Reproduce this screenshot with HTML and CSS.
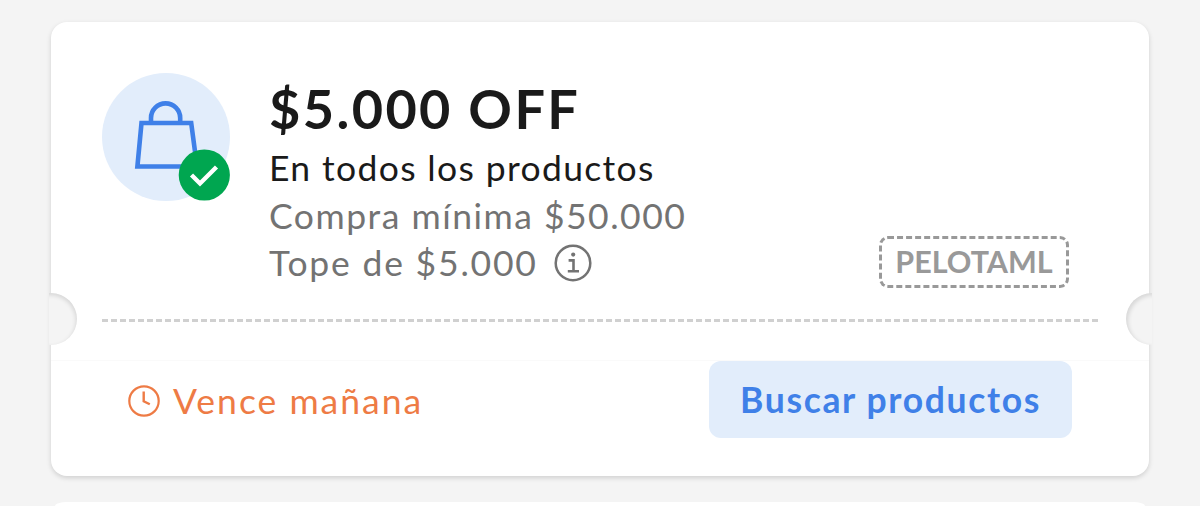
FILE: index.html
```html
<!DOCTYPE html>
<html lang="es">
<head>
	<meta charset="UTF-8">
	<title>Cupones</title>
	<link rel="stylesheet" href="styles.css">
</head>
<body>
	<div class="cupon">
		<div class="detalle">
			<div class="icono">
				<svg class="bolsa" width="128" height="128" viewBox="0 0 128 128">
					<path d="M39.5 50H89.2L95 93.5H35.4Z M49 50V45a14.6 14.6 0 0 1 29.2 0V50" fill="none" stroke="#3f80e8" stroke-width="4.6"/>
				</svg>
				<svg class="check" width="52" height="52" viewBox="0 0 52 52">
					<circle cx="26.3" cy="26" r="25.6" fill="#00a650"/>
					<path d="M13.5 26L22 34.5L38.5 18" fill="none" stroke="#fff" stroke-width="4.4"/>
				</svg>
			</div>
			<div class="textos">
				<h1 class="titulo">$5.000 OFF</h1>
				<p class="linea alcance">En todos los productos</p>
				<p class="linea minimo">Compra mínima $50.000</p>
				<p class="linea tope"><span>Tope de $5.000</span>
					<svg class="info" width="38" height="38" viewBox="0 0 38 38">
						<circle cx="19" cy="19" r="17.3" fill="none" stroke="#737373" stroke-width="2.5"/>
						<circle cx="19.2" cy="10.6" r="2.1" fill="#737373"/>
						<path d="M14.6 16.4H19.5V27.3M13.8 27.3H25" fill="none" stroke="#737373" stroke-width="2.6"/>
					</svg>
				</p>
			</div>
			<span class="codigo">PELOTAML</span>
		</div>
		<div class="corte"></div>
		<div class="muesca izquierda"></div>
		<div class="muesca derecha"></div>
		<div class="pie">
			<div class="vence">
				<svg class="reloj" width="32" height="32" viewBox="0 0 32 32">
					<circle cx="16" cy="16" r="14.7" fill="none" stroke="#ee7b45" stroke-width="2.2"/>
					<path d="M15.7 6.5V16.2L21.8 19.3" fill="none" stroke="#ee7b45" stroke-width="2.4"/>
				</svg>
				<span class="vence-texto">Vence mañana</span>
			</div>
			<a class="boton">Buscar productos</a>
		</div>
	</div>
	<div class="siguiente"></div>
</body>
</html>
```
FILE: styles.css
```css
*{
	box-sizing: border-box;
	margin: 0;
	padding: 0;
}

body{
	height: 506px;
	padding: 22px 51px 0;
	background-color: #f4f4f4;
	font-family: Lato, sans-serif;
}

.cupon{
	position: relative;
	height: 454px;
	border-radius: 16px;
	background-color: #fff;
	box-shadow: 0 2px 5px rgba(0, 0, 0, .15);
}

.siguiente{
	height: 4px;
	margin: 26px 4px 0;
	border-radius: 12px 12px 0 0 / 4px 4px 0 0;
	background-color: #fff;
}

.detalle{
	display: flex;
	height: 297px;
	padding: 51px 80px 0 51px;
}

.icono{
	position: relative;
	width: 128px;
	height: 128px;
	border-radius: 50%;
	background-color: #e2edfb;
}

.bolsa{
	display: block;
}

.check{
	position: absolute;
	right: 0;
	bottom: 0;
}

.textos{
	flex-grow: 1;
	margin-left: 39px;
}

.titulo{
	height: 71px;
	line-height: 72px;
	font-size: 54px;
	font-weight: 700;
	letter-spacing: 2.4px;
	color: #1a1a1a;
}

.linea{
	height: 47.5px;
	line-height: 47.5px;
	font-size: 35.5px;
	letter-spacing: 1.5px;
	color: #737373;
	white-space: nowrap;
}

.alcance{
	letter-spacing: 1.35px;
	color: #1a1a1a;
}

.tope{
	display: flex;
	align-items: center;
	letter-spacing: 1.8px;
}

.info{
	margin-left: 16px;
}

.codigo{
	width: 190px;
	height: 52px;
	margin-top: 163px;
	border: 3px dashed #999;
	border-radius: 9px;
	line-height: 45px;
	text-align: center;
	font-size: 30.5px;
	font-weight: 700;
	color: #999;
}

.corte{
	margin: 0 51px;
	border-top: 3px dashed #d0d0d0;
}

.muesca{
	position: absolute;
	top: 271px;
	width: 52px;
	height: 52px;
	border-radius: 50%;
	background-color: #f4f4f4;
}

.izquierda{
	left: -26px;
	box-shadow: inset -1px 2px 4px rgba(0, 0, 0, .12);
	clip-path: inset(0 0 0 24px);
}

.derecha{
	right: -29px;
	box-shadow: inset 2px 2px 4px rgba(0, 0, 0, .12);
	clip-path: inset(0 26px 0 0);
}

.pie{
	display: flex;
	justify-content: space-between;
	height: 116px;
	margin-top: 38px;
	padding: 0 77px;
	border-top: 1px solid #fafafa;
}

.vence{
	display: flex;
	align-items: center;
	height: 80px;
	font-size: 35.5px;
	letter-spacing: 2px;
	color: #ee7b45;
}

.vence-texto{
	margin: -2px 0 0 13px;
}

.boton{
	width: 363px;
	height: 77px;
	border-radius: 12px;
	background-color: #e2edfb;
	line-height: 77px;
	text-align: center;
	font-size: 35.5px;
	font-weight: 700;
	letter-spacing: 1.65px;
	color: #3f80e8;
}
```
